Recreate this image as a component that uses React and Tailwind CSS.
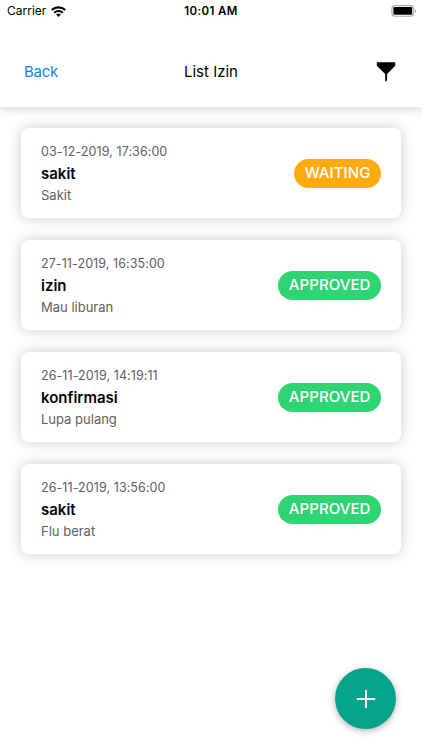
const items = [
  { date: '03-12-2019, 17:36:00', title: 'sakit', note: 'Sakit', status: 'WAITING' },
  { date: '27-11-2019, 16:35:00', title: 'izin', note: 'Mau liburan', status: 'APPROVED' },
  { date: '26-11-2019, 14:19:11', title: 'konfirmasi', note: 'Lupa pulang', status: 'APPROVED' },
  { date: '26-11-2019, 13:56:00', title: 'sakit', note: 'Flu berat', status: 'APPROVED' },
];

function StatusBar() {
  return (
    <div className="grid h-[22px] grid-cols-3 items-center text-[12px] leading-[22px]">
      <div className="flex items-center gap-[5px] pl-[7px]">
        <span>Carrier</span>
        <svg width="15" height="11" viewBox="0 0 15 11" fill="none" stroke="#000" strokeWidth="2.1">
          <path d="M0.8 4.1a9.6 9.6 0 0 1 13.4 0" />
          <path d="M3.2 6.7a6.2 6.2 0 0 1 8.6 0" />
          <path d="M7.5 11 5.1 8.6a3.5 3.5 0 0 1 4.8 0Z" fill="#000" stroke="none" />
        </svg>
      </div>
      <span className="text-center text-[11.5px] font-semibold tracking-[0.4px]">10:01 AM</span>
      <div className="flex justify-end pr-[5px]">
        <svg width="26" height="12" viewBox="0 0 26 12">
          <rect x="0.9" y="0.6" width="21.8" height="10.6" rx="3" fill="#fff" stroke="#aaa" strokeWidth="1.1" />
          <rect x="2.4" y="2.1" width="18.8" height="7.6" rx="1.2" />
          <path d="M24 4.2c1.5.7 1.5 2.8 0 3.5Z" fill="#999" />
        </svg>
      </div>
    </div>
  );
}

function Card({ date, title, note, status }) {
  return (
    <article className="flex h-[90px] items-center justify-between rounded-[8px] bg-white px-5 shadow-[0_0_14px_rgba(0,0,0,0.22)]">
      <div className="flex flex-col pt-px text-[13px] text-[#606060]">
        <span className="text-[12.5px] leading-[22px] tracking-[0.08px]">{date}</span>
        <span className="text-[15px] leading-[21px] font-semibold text-black">{title}</span>
        <span className="leading-[22px]">{note}</span>
      </div>
      <span
        className={`flex h-[29px] items-center rounded-full px-[10.5px] pt-px text-[15px] font-medium tracking-[0.08px] text-white ${
          status === 'WAITING' ? 'bg-[#ffab0f]' : 'bg-[#2ed573]'
        }`}
      >
        {status}
      </span>
    </article>
  );
}

export default function App() {
  return (
    <div className="relative h-[750px] w-[422px] overflow-hidden bg-white font-['Inter',sans-serif] text-black">
      <header className="h-[107px] bg-white shadow-[0_1px_10px_rgba(0,0,0,0.22)]">
        <StatusBar />
        <div className="grid h-[100px] grid-cols-3 items-center px-6 text-[15px]">
          <a className="tracking-[-0.3px] text-[#1482f0]">Back</a>
          <span className="text-center">List Izin</span>
          <button className="mr-0.5 justify-self-end" aria-label="Filter">
            <svg width="20" height="20" viewBox="0 0 20 20">
              <path d="M.8.3h18.4v3.5L11.1 12v6.2L9.2 19.7V12L.8 3.8Z" />
            </svg>
          </button>
        </div>
      </header>
      <main className="flex flex-col gap-[22px] px-[21px] pt-[21px]">
        {items.map((item) => (
          <Card key={item.date} {...item} />
        ))}
      </main>
      <button
        aria-label="Add"
        className="absolute top-[668px] left-[335px] flex size-[61px] items-center justify-center rounded-full bg-[#05a38a] shadow-[0_2px_7px_rgba(0,0,0,0.3)]"
      >
        <svg width="20" height="20" viewBox="0 0 20 20" stroke="#fff" strokeWidth="1.9" strokeLinecap="round">
          <path d="M10 1.6v16.8M1.6 10h16.8" />
        </svg>
      </button>
    </div>
  );
}
